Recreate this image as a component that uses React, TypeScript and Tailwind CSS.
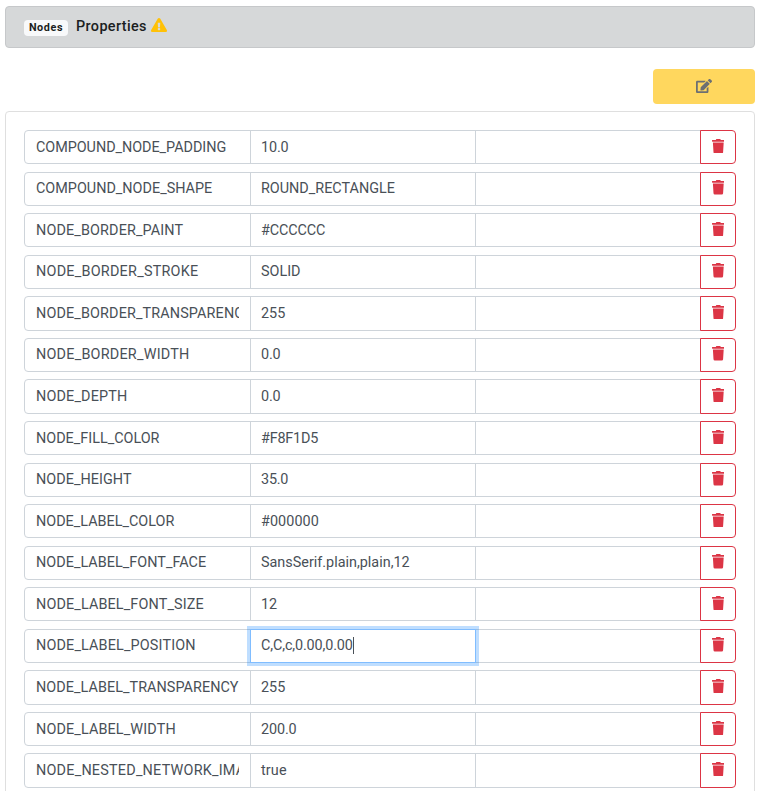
import { FaEdit, FaExclamationTriangle, FaTrash } from "react-icons/fa";

type Property = { name: string; value: string; nameClass?: string; valueClass?: string };

const rows: Property[] = [
  { name: "COMPOUND_NODE_PADDING", value: "10.0", nameClass: "tracking-[-0.04px]", valueClass: "tracking-[-0.15px]" },
  { name: "COMPOUND_NODE_SHAPE", value: "ROUND_RECTANGLE" },
  { name: "NODE_BORDER_PAINT", value: "#CCCCCC", nameClass: "tracking-[0.13px]", valueClass: "tracking-[-0.1px]" },
  { name: "NODE_BORDER_STROKE", value: "SOLID", nameClass: "tracking-[0.24px]" },
  { name: "NODE_BORDER_TRANSPARENCY", value: "255", nameClass: "tracking-[0.13px]" },
  { name: "NODE_BORDER_WIDTH", value: "0.0", nameClass: "tracking-[0.22px]", valueClass: "tracking-[-0.15px]" },
  { name: "NODE_DEPTH", value: "0.0", nameClass: "tracking-[0.15px]", valueClass: "tracking-[-0.15px]" },
  { name: "NODE_FILL_COLOR", value: "#F8F1D5", valueClass: "tracking-[-0.2px]" },
  { name: "NODE_HEIGHT", value: "35.0", nameClass: "tracking-[0.04px]", valueClass: "tracking-[-0.2px]" },
  { name: "NODE_LABEL_COLOR", value: "#000000", valueClass: "tracking-[0.08px]" },
  { name: "NODE_LABEL_FONT_FACE", value: "SansSerif.plain,plain,12", nameClass: "tracking-[0.03px]" },
  { name: "NODE_LABEL_FONT_SIZE", value: "12", nameClass: "tracking-[0.13px]" },
  { name: "NODE_LABEL_POSITION", value: "C,C,c,0.00,0.00", nameClass: "tracking-[0.15px]", valueClass: "tracking-[-0.13px]" },
  { name: "NODE_LABEL_TRANSPARENCY", value: "255", nameClass: "tracking-[0.05px]" },
  { name: "NODE_LABEL_WIDTH", value: "200.0", nameClass: "tracking-[0.13px]", valueClass: "tracking-[-0.12px]" },
  { name: "NODE_NESTED_NETWORK_IMAGE_VISIBLE", value: "true", nameClass: "tracking-[0.22px]", valueClass: "tracking-[0.12px]" },
];

function Row({ name, value, nameClass = "", valueClass = "" }: Property) {
  const focused = name === "NODE_LABEL_POSITION";
  return (
    <div className="mb-[7.27px] flex h-[34.3px] w-[712px] text-[14.4px] leading-[31px] text-[#495057]">
      <div className="w-[227px] shrink-0 rounded-l-[4px] border border-[#ced4da] px-[11px] pt-[0.66px]">
        <div className={`overflow-hidden whitespace-nowrap ${nameClass}`}>{name}</div>
      </div>
      <div
        className={
          focused
            ? "relative z-10 -ml-px w-[226px] shrink-0 border border-[#80bdff] px-[10px] pt-[0.66px] shadow-[0_0_0_3px_rgba(0,123,255,0.25)]"
            : "-ml-px w-[226px] shrink-0 border border-[#ced4da] px-[10px] pt-[0.66px]"
        }
      >
        <div className={`flex items-center whitespace-nowrap ${valueClass}`}>
          {value}
          {focused && <span className="h-[17px] w-px bg-[#495057]" />}
        </div>
      </div>
      <div className="-ml-px w-[226px] shrink-0 border border-[#ced4da]" />
      <button className="relative -ml-px flex w-[36px] shrink-0 justify-center rounded-r-[4px] border border-[#dc3545] pt-[7.66px] text-[#dc3545]">
        <FaTrash className="h-[14.4px] w-[12.6px]" />
      </button>
    </div>
  );
}

export default function App() {
  return (
    <div className="h-[791px] w-[760px] overflow-hidden bg-white px-[5px] pt-[6px] font-[Roboto,sans-serif]">
      <div className="flex h-[42px] items-center rounded-[4px] border border-[#c6c8ca] bg-[#d6d8d9] px-[18px] pb-px text-[#1b1e21]">
        <span className="mt-[3px] flex h-4 w-[44px] items-center justify-center rounded-[4px] bg-[#f8f9fa] text-[10.8px] font-bold tracking-[0.6px]">
          Nodes
        </span>
        <span className="ml-2 text-[14.4px] font-medium tracking-[0.38px]">Properties</span>
        <FaExclamationTriangle className="mb-[3px] ml-[4.5px] text-[#ffc107]" size={16} />
      </div>
      <div className="mt-[21px] flex justify-end">
        <button className="flex h-[35px] w-[102px] items-center justify-center rounded-[4px] bg-[#ffd75e] pb-[2px] text-[#6c6f73]">
          <FaEdit size={16} />
        </button>
      </div>
      <div className="mt-[7px] h-[800px] rounded-[4px] border border-[#dfdfdf] px-[18px] pt-[18px]">
        {rows.map((row) => (
          <Row key={row.name} {...row} />
        ))}
      </div>
    </div>
  );
}
